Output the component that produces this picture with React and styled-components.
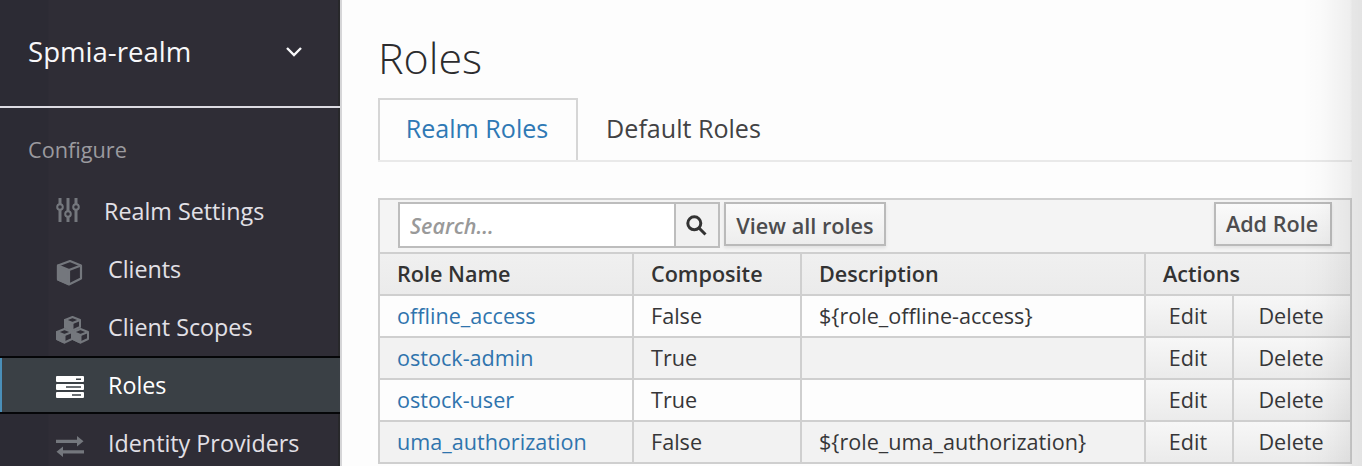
import React from "react";
import styled, { createGlobalStyle, css } from "styled-components";

const Global = createGlobalStyle`
  *, *::before, *::after { box-sizing: border-box; }
  body { margin: 0; background: #fdfdfd; overflow: hidden; }
  body, button, input { font-family: "Open Sans", "Noto Sans", sans-serif; }
`;

const Page = styled.div`
  position: relative;
  display: flex;
  width: 1362px;
  height: 466px;
  overflow: hidden;
  color: #333;
`;

const Sidebar = styled.aside`
  flex: 0 0 340px;
  background: linear-gradient(90deg, #2c2b34 0 48px, #2f2d36 49px 338px, #28282b 338px);
`;

const RealmSelector = styled.div`
  display: flex;
  align-items: center;
  justify-content: space-between;
  height: 108px;
  padding: 0 37px 4px 28px;
  border-bottom: 2px solid #dcdbe2;
  color: #f8f8fa;
  font-size: 27.6px;
  line-height: 36px;

  svg { margin-top: 2px; }
`;

const NavTitle = styled.h2`
  margin: 0;
  padding: 26px 0 0 28px;
  height: 74px;
  font-size: 21.7px;
  line-height: 32px;
  font-weight: 400;
  color: #9b9a9f;
`;

const NavItem = styled.a`
  display: flex;
  align-items: center;
  height: 58px;
  padding: 0 0 0 56px;
  color: ${(p) => (p.$active ? "#fff" : "#e2e0e6")};
  font-size: 23.3px;
  line-height: 30px;
  white-space: nowrap;
  ${(p) =>
    p.$active &&
    css`
      background: #3a4045;
      border-top: 2px solid #050608;
      border-bottom: 2px solid #050608;
      box-shadow: inset 2px 0 0 #4a8fb8;
    `}
`;

const IconSlot = styled.span`
  display: flex;
  flex: 0 0 ${(p) => p.$width}px;
  padding-top: ${(p) => p.$drop}px;
  color: ${(p) => (p.$active ? "#fff" : "#74777d")};
`;

const Main = styled.main`
  flex: 1;
  padding: 29px 10px 0 36px;
  border-left: 2px solid #d6d6d8;
  background: #fdfdfd;
`;

const Title = styled.h1`
  margin: 0;
  height: 69px;
  font-size: 43px;
  line-height: 57px;
  font-weight: 300;
  color: #2c2c2e;
`;

const Tabs = styled.nav`
  display: flex;
  height: 64px;
  width: 974px;
  border-bottom: 2px solid #e9e9e9;
`;

const Tab = styled.a`
  display: flex;
  align-items: center;
  justify-content: center;
  width: ${(p) => p.$width}px;
  height: 62px;
  padding: ${(p) => (p.$active ? "0 2px 4px 0" : "0 0 2px")};
  font-size: 25.1px;
  line-height: 34px;
  color: ${(p) => (p.$active ? "#2f79b5" : "#424244")};
  ${(p) => p.$active && css`
    border: solid #d6d6d6;
    border-width: 2px 2px 0;
  `}
`;

const Panel = styled.section`
  width: 974px;
  height: 266px;
  margin-top: 36px;
  border: 2px solid #cfcfcf;
`;

const Toolbar = styled.div`
  display: flex;
  align-items: flex-start;
  height: 52px;
  padding: 2px 18px 0;
  background: #f4f4f4;
`;

const SearchField = styled.div`
  display: flex;
  width: 322px;
  height: 46px;
  border: 2px solid #bdbdbd;
  background: #fff;
`;

const SearchInput = styled.input`
  width: 274px;
  padding: 1px 0 0 10px;
  border: 0;
  outline: 0;
  background: transparent;
  font-size: 21.5px;
  font-style: italic;
  font-weight: 600;
  &::placeholder { color: #999; opacity: 1; }
`;

const SearchButton = styled.button`
  display: flex;
  align-items: center;
  justify-content: center;
  flex: 1;
  padding: 1px 1px 0 0;
  border: 0;
  border-left: 2px solid #bdbdbd;
  background: #f1f1f1;
  color: #333;
`;

const Button = styled.button`
  width: ${(p) => p.$width}px;
  height: 44px;
  margin-left: ${(p) => (p.$end ? "auto" : "4px")};
  padding: ${(p) => (p.$end ? "0 2px 0 0" : "4px 0 0")};
  border: 2px solid #bababa;
  background: linear-gradient(#fafafa, #ededed);
  box-shadow: 0 2px 3px rgba(0, 0, 0, 0.08);
  color: #4c4c4e;
  font-size: ${(p) => (p.$end ? 21.6 : 21.7)}px;
  line-height: 30px;
  font-weight: 600;
  white-space: nowrap;
`;

const Row = styled.div`
  display: grid;
  grid-template-columns: 252px 168px 344px 88px 118px;
  height: 42px;
  border-top: 2px solid #cfcfcf;
  background: ${(p) => (p.$shaded ? "#f2f2f2" : "#fdfdfd")};
`;

const HeadRow = styled(Row)`
  background: linear-gradient(#f0f0f0, #ebebeb);
`;

const Cell = styled.div`
  display: flex;
  align-items: center;
  padding: 0 0 0 17px;
  font-size: 21.6px;
  line-height: 30px;
  white-space: nowrap;
  color: #363638;
  & + & { border-left: 2px solid #cfcfcf; }
`;

const HeadCell = styled(Cell)`
  font-weight: 600;
  color: #333;
  ${(p) => p.$wide && "grid-column: span 2;"}
`;

const RoleLink = styled.a`
  color: #2f74ad;
`;

const ActionCell = styled(Cell)`
  justify-content: center;
  padding: 0 2px 0 0;
  background: linear-gradient(#f7f7f7, #ebebeb);
`;

const EdgeShade = styled.div`
  position: absolute;
  inset: 0 0 0 auto;
  width: 60px;
  pointer-events: none;
  background: linear-gradient(90deg, rgba(0, 0, 0, 0), rgba(0, 0, 0, 0.015) 35%, rgba(0, 0, 0, 0.06) 80%, rgba(0, 0, 0, 0.09) 84%, rgba(0, 0, 0, 0.1));
`;

const Chevron = () => (
  <svg width="18" height="12" viewBox="0 0 18 12" fill="none" stroke="currentColor" strokeWidth="2.4">
    <path d="M2 2l7 7 7-7" />
  </svg>
);

const Sliders = () => (
  <svg width="24" height="26" viewBox="0 0 24 26" fill="none" stroke="currentColor" strokeWidth="3">
    <path d="M4 0v6M4 12v12M12 0v13M12 19v5M20 0v6M20 12v12" />
    <g strokeWidth="2">
      <circle cx="4" cy="9" r="2.8" />
      <circle cx="12" cy="16" r="2.8" />
      <circle cx="20" cy="9" r="2.8" />
    </g>
  </svg>
);

const Cube = () => (
  <svg width="27" height="27" viewBox="0 0 27 27" fill="none" stroke="currentColor" strokeWidth="2.2" strokeLinejoin="round">
    <path d="M2 6.500L14 2l11 4.500v13L13 25.500 2 20.500z" />
    <path d="M2 6.500L13 11v14L2 20.500z" fill="currentColor" />
    <path d="M13 11l12-4.500" />
  </svg>
);

const Cubes = () => (
  <svg width="34" height="28" viewBox="0 0 34 28" fill="none" stroke="currentColor" strokeWidth="2" strokeLinejoin="round">
    {[[9, 1], [1, 13], [17, 13]].map(([x, y]) => (
      <g key={`${x}-${y}`} transform={`translate(${x} ${y})`}>
        <path d="M0 3l7.500-3L15 3v7l-7.500 3.500L0 10z" />
        <path d="M0 3l7.500 3v7.500L0 10z" fill="currentColor" />
        <path d="M7.500 6L15 3" />
      </g>
    ))}
  </svg>
);

const Servers = () => (
  <svg width="28" height="23" viewBox="0 0 28 23">
    <path fill="currentColor" d="M1 0h26q1 0 1 1v4q0 1-1 1H1q-1 0-1-1V1q0-1 1-1zM1 8h26q1 0 1 1v4q0 1-1 1H1q-1 0-1-1V9q0-1 1-1zM1 16h26q1 0 1 1v4q0 1-1 1H1q-1 0-1-1v-4q0-1 1-1z" />
    <path stroke="#3a4045" strokeWidth="1.6" d="M20 3.200h5M10 11h15M16 19h9" />
  </svg>
);

const Exchange = () => (
  <svg width="28" height="22" viewBox="0 0 28 22" fill="currentColor">
    <path d="M0 3.700h21V0l6.500 5.300-6.500 5.300V7.100H0zM28 14.200H7v-3.700L.5 15.800 7 21v-3.500h21z" />
  </svg>
);

const Magnifier = () => (
  <svg width="21" height="21" viewBox="0 0 21 21" fill="none" stroke="currentColor" strokeWidth="3">
    <circle cx="8.300" cy="8.300" r="6.500" />
    <path d="M13 13l6.500 6.500" />
  </svg>
);

const navItems = [
  { label: "Realm Settings", Icon: Sliders, slot: 48, drop: 0 },
  { label: "Clients", Icon: Cube, slot: 52, drop: 7 },
  { label: "Client Scopes", Icon: Cubes, slot: 52, drop: 6 },
  { label: "Roles", Icon: Servers, slot: 52, drop: 5, active: true },
  { label: "Identity Providers", Icon: Exchange, slot: 52, drop: 8 },
];

const roles = [
  { name: "offline_access", composite: "False", description: "${role_offline-access}" },
  { name: "ostock-admin", composite: "True", description: "" },
  { name: "ostock-user", composite: "True", description: "" },
  { name: "uma_authorization", composite: "False", description: "${role_uma_authorization}" },
];

export default function App() {
  return (
    <>
      <Global />
      <Page>
        <Sidebar>
          <RealmSelector>
            <span>Spmia-realm</span>
            <Chevron />
          </RealmSelector>
          <NavTitle>Configure</NavTitle>
          {navItems.map(({ label, Icon, slot, drop, active }) => (
            <NavItem key={label} $active={active}>
              <IconSlot $width={slot} $drop={drop} $active={active}><Icon /></IconSlot>
              {label}
            </NavItem>
          ))}
        </Sidebar>
        <Main>
          <Title>Roles</Title>
          <Tabs>
            <Tab $active $width={200}>Realm Roles</Tab>
            <Tab $width={211}>Default Roles</Tab>
          </Tabs>
          <Panel>
            <Toolbar>
              <SearchField>
                <SearchInput placeholder="Search..." />
                <SearchButton aria-label="Search"><Magnifier /></SearchButton>
              </SearchField>
              <Button $width={162}>View all roles</Button>
              <Button $end $width={118}>Add Role</Button>
            </Toolbar>
            <HeadRow>
              <HeadCell>Role Name</HeadCell>
              <HeadCell>Composite</HeadCell>
              <HeadCell>Description</HeadCell>
              <HeadCell $wide>Actions</HeadCell>
            </HeadRow>
            {roles.map((role, i) => (
              <Row key={role.name} $shaded={i % 2 === 1}>
                <Cell><RoleLink>{role.name}</RoleLink></Cell>
                <Cell>{role.composite}</Cell>
                <Cell>{role.description}</Cell>
                <ActionCell>Edit</ActionCell>
                <ActionCell>Delete</ActionCell>
              </Row>
            ))}
          </Panel>
        </Main>
        <EdgeShade />
      </Page>
    </>
  );
}
